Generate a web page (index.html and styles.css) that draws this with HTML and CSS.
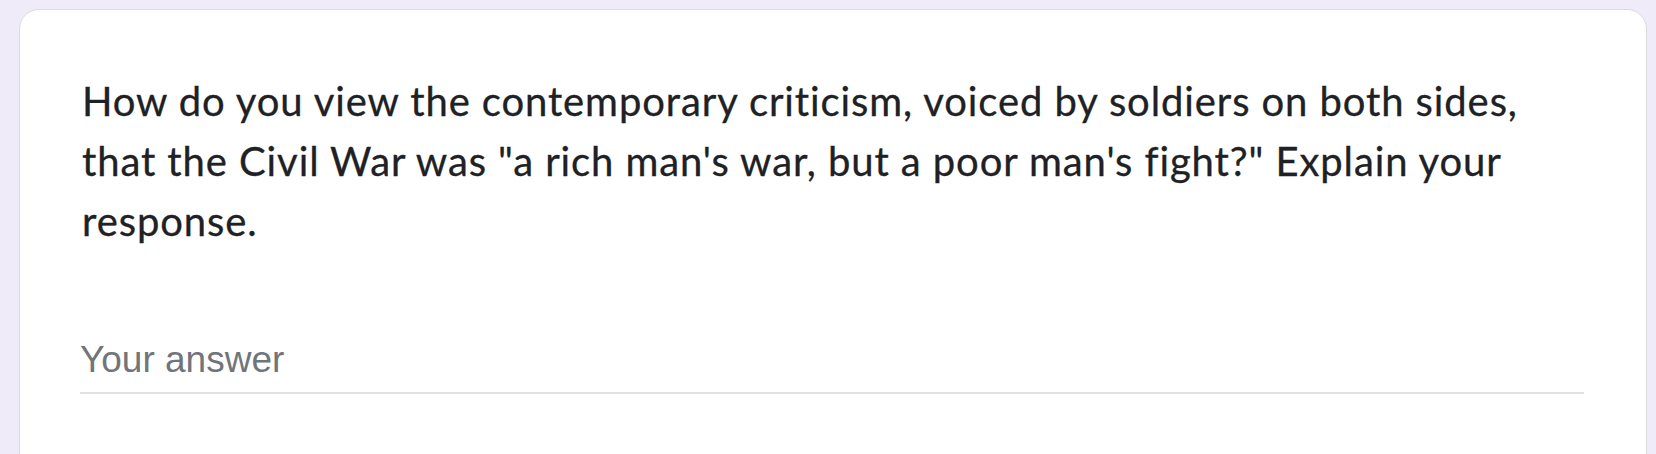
FILE: index.html
```html
<!DOCTYPE html>
<html>
<head>
<meta charset="utf-8">
<link rel="stylesheet" href="styles.css">
</head>
<body>
<div class="page">
  <div class="card">
    <div class="question">How do you view the contemporary criticism, voiced by soldiers on both sides, that the Civil War was "a rich man's war, but a poor man's fight?" Explain your response.</div>
    <div class="answer">
      <div class="placeholder">Your answer</div>
    </div>
  </div>
</div>
</body>
</html>
```
FILE: styles.css
```css
html, body {
  margin: 0;
  padding: 0;
  background: #f0ebf8;
  overflow: hidden;
}
.page {
  height: 454px;
  overflow: hidden;
  padding: 9px 9px 0 19px;
  box-sizing: border-box;
}
.card {
  box-sizing: border-box;
  width: 1628px;
  min-height: 520px;
  background: #ffffff;
  border: 1px solid #dadce0;
  border-radius: 20px;
  padding: 61px 60px 60px 60px;
}
.question {
  font-family: Lato, "Open Sans", sans-serif;
  font-size: 40px;
  line-height: 60px;
  letter-spacing: 0.9px;
  color: #202124;
  padding-left: 2px;
  -webkit-text-stroke: 0.3px #202124;
}
.answer {
  margin-top: 89px;
  padding-bottom: 12px;
  border-bottom: 2px solid #e0e0e0;
  margin-right: 2px;
}
.placeholder {
  font-family: "Liberation Sans", Arial, sans-serif;
  font-size: 37px;
  line-height: 40px;
  color: #70757a;
}
```
